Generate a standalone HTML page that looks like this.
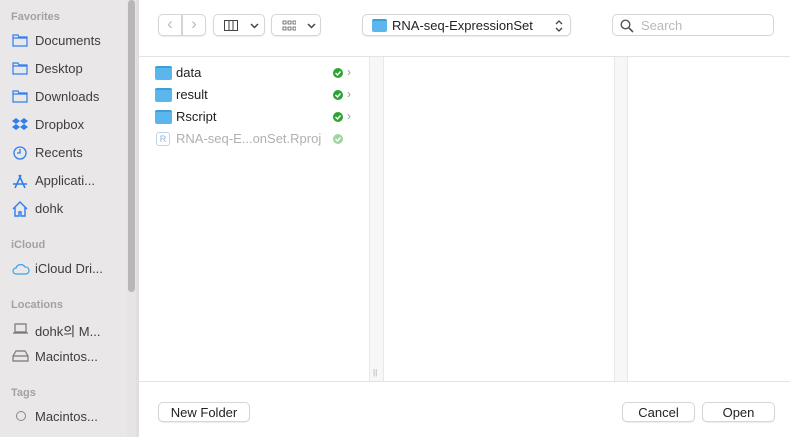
<!DOCTYPE html><html><head><style>
*{box-sizing:border-box;margin:0;padding:0}
body{width:790px;height:437px;overflow:hidden;font-family:"Liberation Sans","Noto Sans CJK KR",sans-serif;background:#fff;position:relative;color:#262626}
.sb{position:absolute;left:0;top:0;width:127px;height:437px;background:#e9e7e8}
.scr{position:absolute;left:127px;top:0;width:9px;height:437px;background:#e6e4e5}
.thumb{position:absolute;left:128px;top:0;width:7px;height:292px;background:#b8b6b7;border-radius:4px}
.sep{position:absolute;left:136px;top:0;width:3px;height:437px;background:#e0dede}
.hd{position:absolute;left:11px;font-size:11px;color:#a3a1a2;font-weight:bold}
.it{position:absolute;left:35px;font-size:13px;color:#3d3d3d}
.ic{position:absolute;left:12px}
.btn{position:absolute;background:#fff;border:1px solid #d6d6d6;border-radius:5px;box-shadow:0 1px 1px rgba(0,0,0,.08);font-size:13px;color:#222;text-align:center}
.f{position:absolute;left:176px;font-size:13px;color:#222}
.fold{position:absolute;left:155px;width:17px;height:14px;background:#5ab6ec;border-radius:2px;border-top:2px solid #3d9fd8}
.ok{position:absolute;left:333px;width:10px;height:10px}
.ar{position:absolute;left:347px;font-size:12px;color:#999}
</style></head><body>
<div class="sb"></div><div class="scr"></div><div class="thumb"></div><div class="sep"></div>
<div class="hd" style="top:11px">Favorites</div>
<svg class="ic" style="top:33px" width="16" height="14"><path d="M1 2h5l1 2h8v9H1z M1 5h14" fill="none" stroke="#2d7ff0" stroke-width="1.2"/></svg><div class="it" style="top:33px">Documents</div>
<svg class="ic" style="top:61px" width="16" height="14"><path d="M1 2h5l1 2h8v9H1z M1 5h14" fill="none" stroke="#2d7ff0" stroke-width="1.2"/></svg><div class="it" style="top:61px">Desktop</div>
<svg class="ic" style="top:89px" width="16" height="14"><path d="M1 2h5l1 2h8v9H1z M1 5h14" fill="none" stroke="#2d7ff0" stroke-width="1.2"/></svg><div class="it" style="top:89px">Downloads</div>
<svg class="ic" style="top:117px" width="16" height="14"><path d="M4 1l4 3-4 3-4-3zM12 1l4 3-4 3-4-3zM4 7l4 3-4 3-4-3zM12 7l4 3-4 3-4-3z" fill="#2d7ff0"/></svg><div class="it" style="top:117px">Dropbox</div>
<svg class="ic" style="top:145px" width="16" height="16"><circle cx="8" cy="8" r="6" fill="none" stroke="#2d7ff0" stroke-width="1.3"/><path d="M8 4v4H5" fill="none" stroke="#2d7ff0" stroke-width="1.3"/></svg><div class="it" style="top:145px">Recents</div>
<svg class="ic" style="top:173px" width="16" height="16"><path d="M3 15L9 2M13 15L7 2M1 11h14" stroke="#2d7ff0" stroke-width="1.5" fill="none"/></svg><div class="it" style="top:173px">Applicati...</div>
<svg class="ic" style="top:201px" width="16" height="16"><path d="M1 8L8 1l7 7M3 6v9h4v-4h2v4h4V6" stroke="#2d7ff0" stroke-width="1.4" fill="none"/></svg><div class="it" style="top:201px">dohk</div>
<div class="hd" style="top:239px">iCloud</div>
<svg class="ic" style="top:263px" width="18" height="12"><path d="M4 11a3 3 0 010-6 5 5 0 019-1 3.5 3.5 0 011 7z" fill="none" stroke="#3aa2e8" stroke-width="1.2"/></svg><div class="it" style="top:261px">iCloud Dri...</div>
<div class="hd" style="top:299px">Locations</div>
<svg class="ic" style="top:323px" width="17" height="12"><path d="M3 1h11v8H3zM1 10h15" fill="none" stroke="#777" stroke-width="1.2"/></svg><div class="it" style="top:321px">dohk의 M...</div>
<svg class="ic" style="top:350px" width="17" height="12"><path d="M1 6l3-5h9l3 5v5H1zM1 6h15" fill="none" stroke="#777" stroke-width="1.2"/></svg><div class="it" style="top:349px">Macintos...</div>
<div class="hd" style="top:387px">Tags</div>
<div style="position:absolute;left:16px;top:411px;width:10px;height:10px;border:1.3px solid #888;border-radius:50%"></div><div class="it" style="top:409px">Macintos...</div>

<div class="btn" style="left:158px;top:14px;width:24px;height:22px;border-radius:5px 0 0 5px;color:#bbb;font-size:17px;line-height:18px">‹</div>
<div class="btn" style="left:182px;top:14px;width:24px;height:22px;border-radius:0 5px 5px 0;color:#bbb;font-size:17px;line-height:18px">›</div>
<div class="btn" style="left:213px;top:14px;width:52px;height:22px"><svg style="position:absolute;left:10px;top:5px" width="14" height="11"><path d="M.5.5h13v10H.5zM5 .5v10M9 .5v10" fill="none" stroke="#444"/></svg><svg style="position:absolute;left:36px;top:8px" width="9" height="6"><path d="M1 1l3.5 3.5L8 1" fill="none" stroke="#444" stroke-width="1.5"/></svg></div>
<div class="btn" style="left:271px;top:14px;width:50px;height:22px"><svg style="position:absolute;left:10px;top:5px" width="14" height="11"><path d="M1 1h3v3H1zM6 1h3v3H6zM11 1h3v3h-3zM1 7h3v3H1zM6 7h3v3H6zM11 7h3v3h-3z" fill="none" stroke="#555" stroke-width=".8"/></svg><svg style="position:absolute;left:35px;top:8px" width="9" height="6"><path d="M1 1l3.5 3.5L8 1" fill="none" stroke="#444" stroke-width="1.5"/></svg></div>
<div class="btn" style="left:362px;top:14px;width:209px;height:22px;text-align:left;padding:3px 0 0 29px">RNA-seq-ExpressionSet<div style="position:absolute;left:9px;top:4px;width:15px;height:13px;background:#5ab6ec;border-radius:2px;border-top:2px solid #3d9fd8"></div><svg style="position:absolute;left:192px;top:5px" width="8" height="12"><path d="M1 4l3-3 3 3M1 8l3 3 3-3" fill="none" stroke="#444" stroke-width="1.3"/></svg></div>
<div class="btn" style="left:612px;top:14px;width:162px;height:22px;text-align:left;padding:3px 0 0 28px;color:#b9b9b9;box-shadow:none">Search<svg style="position:absolute;left:7px;top:4px" width="14" height="14"><circle cx="5.5" cy="5.5" r="4.3" fill="none" stroke="#555" stroke-width="1.4"/><path d="M9 9l4 4" stroke="#555" stroke-width="1.6"/></svg></div>

<div style="position:absolute;left:139px;top:56px;width:651px;height:1px;background:#e3e3e3"></div>
<div style="position:absolute;left:369px;top:57px;width:15px;height:324px;background:#f7f7f7;border-left:1px solid #e8e8e8;border-right:1px solid #e8e8e8"></div>
<div style="position:absolute;left:373px;top:368px;font-size:8px;color:#aaa">||</div>
<div style="position:absolute;left:614px;top:57px;width:14px;height:324px;background:#f7f7f7;border-left:1px solid #e8e8e8;border-right:1px solid #e8e8e8"></div>
<div style="position:absolute;left:139px;top:381px;width:651px;height:1px;background:#e3e3e3"></div>

<div class="fold" style="top:66px"></div><div class="f" style="top:65px">data</div><svg class="ok" style="top:68px"><circle cx="5" cy="5" r="5" fill="#2aa532"/><path d="M2.5 5l2 2 3-3.5" stroke="#fff" stroke-width="1.4" fill="none"/></svg><div class="ar" style="top:65px">›</div>
<div class="fold" style="top:88px"></div><div class="f" style="top:87px">result</div><svg class="ok" style="top:90px"><circle cx="5" cy="5" r="5" fill="#2aa532"/><path d="M2.5 5l2 2 3-3.5" stroke="#fff" stroke-width="1.4" fill="none"/></svg><div class="ar" style="top:87px">›</div>
<div class="fold" style="top:110px"></div><div class="f" style="top:109px">Rscript</div><svg class="ok" style="top:112px"><circle cx="5" cy="5" r="5" fill="#2aa532"/><path d="M2.5 5l2 2 3-3.5" stroke="#fff" stroke-width="1.4" fill="none"/></svg><div class="ar" style="top:109px">›</div>
<div style="position:absolute;left:156px;top:132px;width:14px;height:14px;border:1px solid #bcd6ec;border-radius:3px;font-size:9px;color:#8fb3d6;text-align:center;line-height:12px">R</div><div class="f" style="top:131px;color:#b0b0b0">RNA-seq-E...onSet.Rproj</div><svg class="ok" style="top:134px"><circle cx="5" cy="5" r="5" fill="#9ed5a2"/><path d="M2.5 5l2 2 3-3.5" stroke="#fff" stroke-width="1.4" fill="none"/></svg>

<div class="btn" style="left:158px;top:402px;width:92px;height:20px;padding-top:2px">New Folder</div>
<div class="btn" style="left:622px;top:402px;width:73px;height:20px;padding-top:2px">Cancel</div>
<div class="btn" style="left:702px;top:402px;width:73px;height:20px;padding-top:2px">Open</div>
</body></html>
